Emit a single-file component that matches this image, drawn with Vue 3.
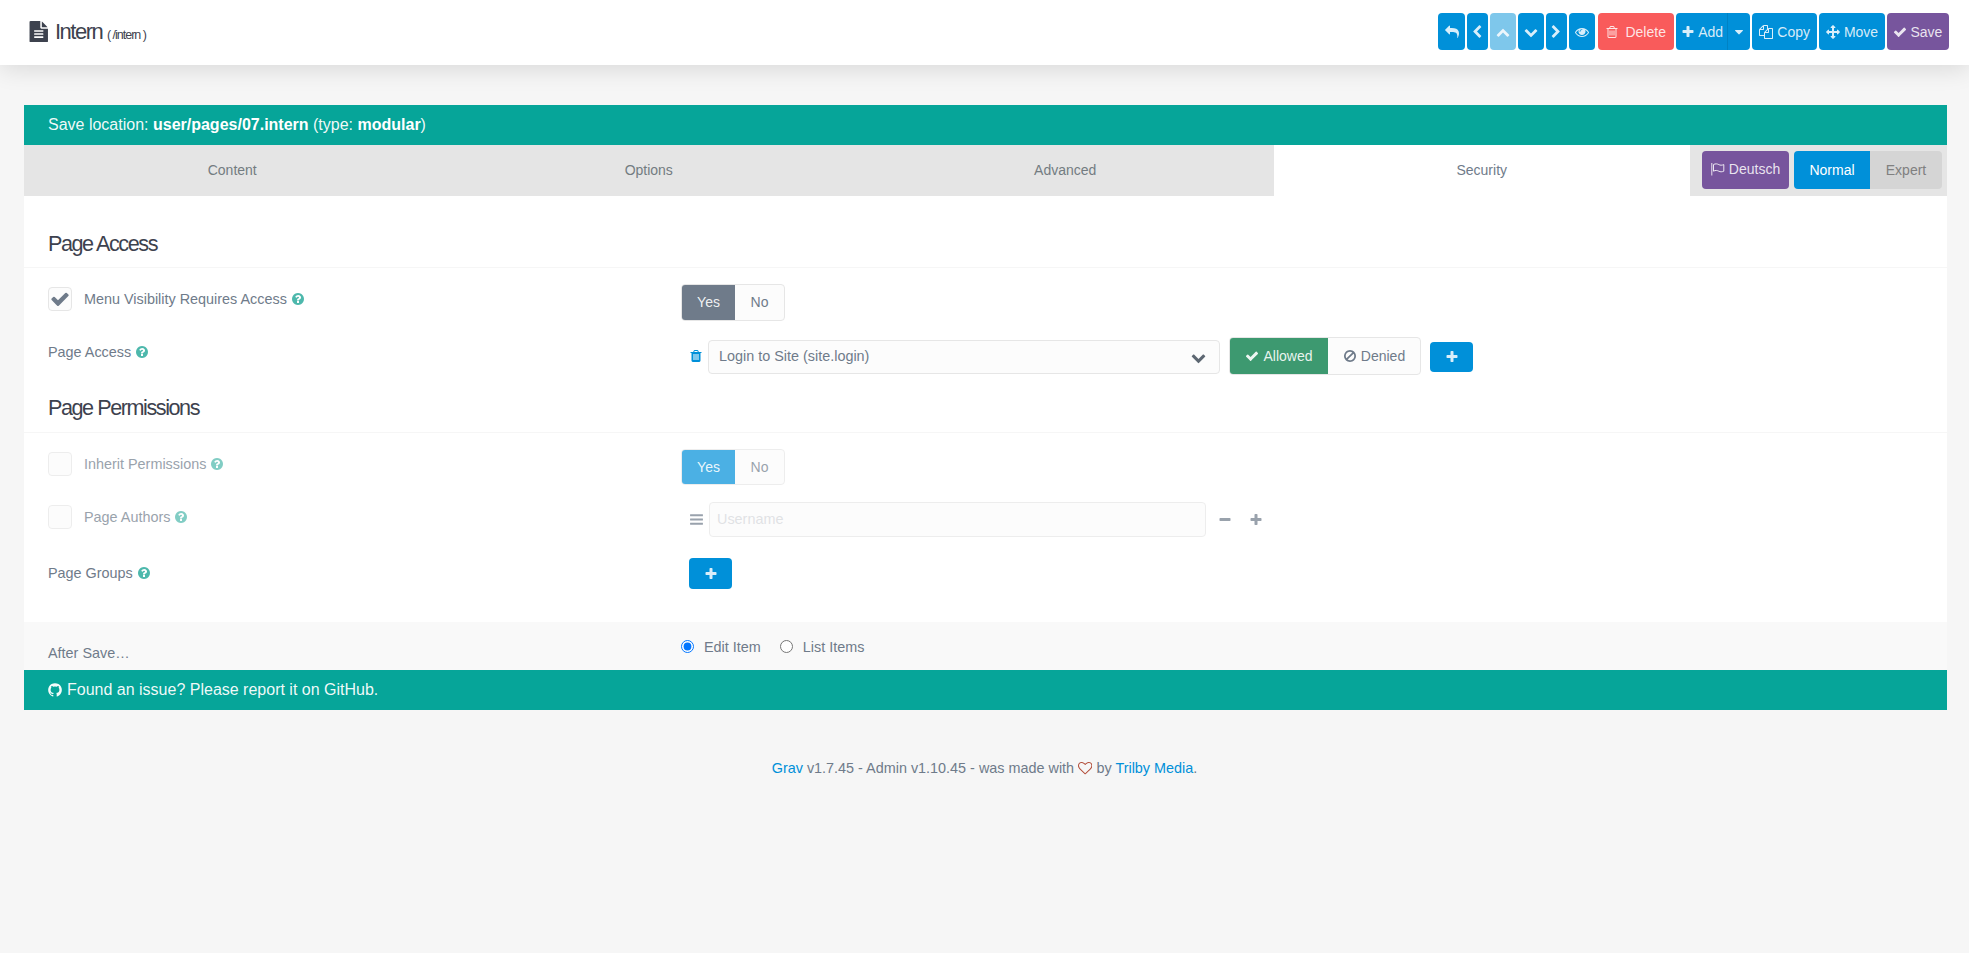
<template>
  <div class="page">
    <header class="topbar">
      <div class="title">
        <svg class="title-icon" viewBox="0 0 1792 1792"><path :d="icons.file" /></svg>
        <h1>Intern <small>( /intern )</small></h1>
      </div>
      <div class="toolbar">
        <a
          v-for="b in toolbar"
          :key="b.key"
          class="tool"
          :class="b.cls"
        >
          <svg class="ico" viewBox="0 0 1792 1792"><path :d="icons[b.icon]" /></svg>
          <span v-if="b.label">{{ b.label }}</span>
        </a>
      </div>
    </header>

    <main class="card">
      <div class="notice">
        Save location: <b>user/pages/07.intern</b> (type: <b>modular</b>)
      </div>

      <div class="tabs-bar">
        <div class="tabs">
          <div
            v-for="t in tabs"
            :key="t"
            class="tab"
            :class="{ active: t === 'Security' }"
          >{{ t }}</div>
        </div>
        <div class="tab-actions">
          <a class="lang">
            <svg class="ico" viewBox="0 0 14 14">
              <path class="flag" d="M.8 1v12.500M2.500 2.600c2-1.200 3.800-.8 5.300 0s3 .8 5 0v6.600c-2 .8-3.500.8-5 0s-3.300-1.200-5.300 0z" />
            </svg>
            Deutsch
          </a>
          <div class="mode">
            <span class="mode-on">Normal</span>
            <span class="mode-off">Expert</span>
          </div>
        </div>
      </div>

      <h2 class="section first">Page Access</h2>

      <div class="row row-1">
        <div class="label check-label">
          <span class="checkbox">
            <svg viewBox="0 0 1792 1792"><path :d="icons.check" /></svg>
          </span>
          Menu Visibility Requires Access
          <svg class="help" viewBox="0 0 1792 1792"><path :d="icons.help" /></svg>
        </div>
        <div class="toggle">
          <span class="yes slate">Yes</span>
          <span class="no">No</span>
        </div>
      </div>

      <div class="row row-2">
        <div class="label">
          Page Access
          <svg class="help" viewBox="0 0 1792 1792"><path :d="icons.help" /></svg>
        </div>
        <div class="field access">
          <svg class="trash" viewBox="0 0 1792 1792"><path :d="icons.trash" /></svg>
          <div class="select">
            <span class="select-text">Login to Site (site.login)</span>
            <svg class="chevron" viewBox="0 0 1792 1792"><path :d="icons.down" /></svg>
          </div>
          <div class="toggle allow">
            <span class="allowed">
              <svg class="ico" viewBox="0 0 1792 1792"><path :d="icons.check" /></svg>
              Allowed
            </span>
            <span class="denied">
              <svg class="ico" viewBox="0 0 1792 1792"><path :d="icons.ban" /></svg>
              Denied
            </span>
          </div>
          <a class="add-btn">
            <svg class="ico" viewBox="0 0 1792 1792"><path :d="icons.plus" /></svg>
          </a>
        </div>
      </div>

      <h2 class="section">Page Permissions</h2>

      <div class="row row-3 faded">
        <div class="label check-label">
          <span class="checkbox"></span>
          Inherit Permissions
          <svg class="help" viewBox="0 0 1792 1792"><path :d="icons.help" /></svg>
        </div>
        <div class="toggle">
          <span class="yes blue">Yes</span>
          <span class="no">No</span>
        </div>
      </div>

      <div class="row row-4">
        <div class="label check-label faded">
          <span class="checkbox"></span>
          Page Authors
          <svg class="help" viewBox="0 0 1792 1792"><path :d="icons.help" /></svg>
        </div>
        <div class="field authors faded">
          <svg class="bars" viewBox="0 0 1792 1792"><path :d="icons.bars" /></svg>
          <input class="text-input" type="text" placeholder="Username" />
          <svg class="step minus" viewBox="0 0 1792 1792"><path :d="icons.minus" /></svg>
          <svg class="step" viewBox="0 0 1792 1792"><path :d="icons.plus" /></svg>
        </div>
      </div>

      <div class="row row-5">
        <div class="label">
          Page Groups
          <svg class="help" viewBox="0 0 1792 1792"><path :d="icons.help" /></svg>
        </div>
        <div class="field">
          <a class="add-btn">
            <svg class="ico" viewBox="0 0 1792 1792"><path :d="icons.plus" /></svg>
          </a>
        </div>
      </div>

      <div class="after-save">
        <div class="label">After Save…</div>
        <div class="radios">
          <label><input type="radio" name="after" checked /> Edit Item</label>
          <label><input type="radio" name="after" /> List Items</label>
        </div>
      </div>

      <div class="notice issue">
        <svg class="gh" viewBox="0 0 1792 1792"><path :d="icons.github" /></svg>
        <span>Found an issue? Please report it on GitHub.</span>
      </div>
    </main>

    <footer class="credits">
      <a>Grav</a> v1.7.45 - Admin v1.10.45 - was made with
      <svg class="heart" viewBox="0 0 1792 1792"><path :d="icons.heart" /></svg>
      by <a>Trilby Media</a>.
    </footer>
  </div>
</template>

<script setup>
// font awesome 4 glyphs
const icons = {
  file: 'M1596 476q14 14 28 36h-472v-472q22 14 36 28zm-476 164h544v1056q0 40-28 68t-68 28h-1344q-40 0-68-28t-28-68v-1600q0-40 28-68t68-28h800v544q0 40 28 68t68 28zm160 736v-64q0-14-9-23t-23-9h-704q-14 0-23 9t-9 23v64q0 14 9 23t23 9h704q14 0 23-9t9-23zm0-256v-64q0-14-9-23t-23-9h-704q-14 0-23 9t-9 23v64q0 14 9 23t23 9h704q14 0 23-9t9-23zm0-256v-64q0-14-9-23t-23-9h-704q-14 0-23 9t-9 23v64q0 14 9 23t23 9h704q14 0 23-9t9-23z',
  check: 'M1671 566q0 40-28 68l-724 724-136 136q-28 28-68 28t-68-28l-136-136-362-362q-28-28-28-68t28-68l136-136q28-28 68-28t68 28l294 295 656-657q28-28 68-28t68 28l136 136q28 28 28 68z',
  plus: 'M1600 736v192q0 40-28 68t-68 28h-416v416q0 40-28 68t-68 28h-192q-40 0-68-28t-28-68v-416h-416q-40 0-68-28t-28-68v-192q0-40 28-68t68-28h416v-416q0-40 28-68t68-28h192q40 0 68 28t28 68v416h416q40 0 68 28t28 68z',
  minus: 'M1600 736v192q0 40-28 68t-68 28h-1216q-40 0-68-28t-28-68v-192q0-40 28-68t68-28h1216q40 0 68 28t28 68z',
  down: 'M1683 808l-742 741q-19 19-45 19t-45-19l-742-741q-19-19-19-45.5t19-45.5l166-165q19-19 45-19t45 19l531 531 531-531q19-19 45-19t45 19l166 165q19 19 19 45.500t-19 45.500z',
  up: 'M1683 1331l-166 165q-19 19-45 19t-45-19l-531-531-531 531q-19 19-45 19t-45-19l-166-165q-19-19-19-45.500t19-45.500l742-741q19-19 45-19t45 19l742 741q19 19 19 45.500t-19 45.500z',
  left: 'M1427 301l-531 531 531 531q19 19 19 45t-19 45l-166 166q-19 19-45 19t-45-19l-742-742q-19-19-19-45t19-45l742-742q19-19 45-19t45 19l166 166q19 19 19 45t-19 45z',
  right: 'M1363 877l-742 742q-19 19-45 19t-45-19l-166-166q-19-19-19-45t19-45l531-531-531-531q-19-19-19-45t19-45l166-166q19-19 45-19t45 19l742 742q19 19 19 45t-19 45z',
  reply: 'M1792 1120q0 166-127 451-3 7-10.500 24t-13.500 30-13 22q-12 17-28 17-15 0-23.500-10t-8.500-25q0-9 2.500-26.500t2.500-23.500q5-68 5-123 0-101-17.500-181t-48.500-138.500-80-101-105.500-69.500-133-42.500-154-21.500-175.500-6h-224v256q0 26-19 45t-45 19-45-19l-512-512q-19-19-19-45t19-45l512-512q19-19 45-19t45 19 19 45v256h224q713 0 875 403 53 134 53 333z',
  eye: 'M1664 960q-152-236-381-353 61 104 61 225 0 185-131.500 316.500t-316.500 131.500-316.500-131.500-131.500-316.500q0-121 61-225-229 117-381 353 133 205 333.500 326.500t434.500 121.500 434.500-121.500 333.500-326.500zm-720-384q0-20-14-34t-34-14q-125 0-214.500 89.500t-89.500 214.500q0 20 14 34t34 14 34-14 14-34q0-86 61-147t147-61q20 0 34-14t14-34zm848 384q0 34-20 69-140 230-376.500 368.500t-499.500 138.500-499.500-139-376.500-368q-20-35-20-69t20-69q140-229 376.500-368t499.500-139 499.500 139 376.500 368q20 35 20 69z',
  trashO: 'M704 736v576q0 14-9 23t-23 9h-64q-14 0-23-9t-9-23v-576q0-14 9-23t23-9h64q14 0 23 9t9 23zm256 0v576q0 14-9 23t-23 9h-64q-14 0-23-9t-9-23v-576q0-14 9-23t23-9h64q14 0 23 9t9 23zm256 0v576q0 14-9 23t-23 9h-64q-14 0-23-9t-9-23v-576q0-14 9-23t23-9h64q14 0 23 9t9 23zm128 724v-948h-896v948q0 22 7 40.500t14.500 27 10.500 8.500h832q3 0 10.500-8.500t14.500-27 7-40.500zm-672-1076h448l-48-117q-7-9-17-11h-317q-10 2-17 11zm928 32v64q0 14-9 23t-23 9h-96v948q0 83-47 143.500t-113 60.500h-832q-66 0-113-58.500t-47-141.500v-952h-96q-14 0-23-9t-9-23v-64q0-14 9-23t23-9h309l70-167q15-37 54-63t79-26h320q40 0 79 26t54 63l70 167h309q14 0 23 9t9 23z',
  trash: 'M704 1376v-704q0-14-9-23t-23-9h-64q-14 0-23 9t-9 23v704q0 14 9 23t23 9h64q14 0 23-9t9-23zm256 0v-704q0-14-9-23t-23-9h-64q-14 0-23 9t-9 23v704q0 14 9 23t23 9h64q14 0 23-9t9-23zm256 0v-704q0-14-9-23t-23-9h-64q-14 0-23 9t-9 23v704q0 14 9 23t23 9h64q14 0 23-9t9-23zm-544-992h448l-48-117q-7-9-17-11h-317q-10 2-17 11zm928 32v64q0 14-9 23t-23 9h-96v948q0 83-47 143.500t-113 60.500h-832q-66 0-113-58.500t-47-141.500v-952h-96q-14 0-23-9t-9-23v-64q0-14 9-23t23-9h309l70-167q15-37 54-63t79-26h320q40 0 79 26t54 63l70 167h309q14 0 23 9t9 23z',
  copy: 'M1696 384q40 0 68 28t28 68v1216q0 40-28 68t-68 28h-960q-40 0-68-28t-28-68v-288h-544q-40 0-68-28t-28-68v-672q0-40 20-88t48-76l408-408q28-28 76-48t88-20h416q40 0 68 28t28 68v328q68-40 128-40h416zm-544 213l-299 299h299v-299zm-640-384l-299 299h299v-299zm196 647l316-316v-416h-384v416q0 40-28 68t-68 28h-416v640h512v-256q0-40 20-88t48-76zm956 804v-1152h-384v416q0 40-28 68t-68 28h-416v640h896z',
  move: 'M1792 896q0 26-19 45l-256 256q-19 19-45 19t-45-19-19-45v-128h-384v384h128q26 0 45 19t19 45-19 45l-256 256q-19 19-45 19t-45-19l-256-256q-19-19-19-45t19-45 45-19h128v-384h-384v128q0 26-19 45t-45 19-45-19l-256-256q-19-19-19-45t19-45l256-256q19-19 45-19t45 19 19 45v128h384v-384h-128q-26 0-45-19t-19-45 19-45l256-256q19-19 45-19t45 19l256 256q19 19 19 45t-19 45-45 19h-128v384h384v-128q0-26 19-45t45-19 45 19l256 256q19 19 19 45z',
  caret: 'M1408 704q0 26-19 45l-448 448q-19 19-45 19t-45-19l-448-448q-19-19-19-45t19-45 45-19h896q26 0 45 19t19 45z',
  ban: 'M1440 893q0-161-87-295l-754 753q137 89 297 89 111 0 211.500-43.500t173.500-116.500 116-174.500 43-212.500zm-999 299l755-754q-135-91-300-91-148 0-273 73t-198 199-73 274q0 162 89 299zm1223-299q0 157-61 300t-163.500 246-245 164-298.500 61-298.500-61-245-164-163.500-246-61-300 61-299.500 163.500-245.500 245-164 298.500-61 298.500 61 245 164 163.500 245.500 61 299.500z',
  help: 'M1024 1376v-192q0-14-9-23t-23-9h-192q-14 0-23 9t-9 23v192q0 14 9 23t23 9h192q14 0 23-9t9-23zm256-672q0-88-55.500-163t-138.500-116-170-41q-243 0-371 213-15 24 8 42l132 100q7 6 19 6 16 0 25-12 53-68 86-92 34-24 86-24 48 0 85.500 26t37.500 59q0 38-20 61t-68 45q-63 28-115.500 86.500t-52.500 125.500v36q0 14 9 23t23 9h192q14 0 23-9t9-23q0-19 21.500-49.500t54.500-49.500q32-18 49-28.500t46-35 44.500-48 28-60.500 12.500-81zm384 192q0 209-103 385.500t-279.500 279.500-385.500 103-385.500-103-279.500-279.500-103-385.500 103-385.500 279.500-279.500 385.500-103 385.500 103 279.500 279.500 103 385.500z',
  bars: 'M1664 1344v128q0 26-19 45t-45 19h-1408q-26 0-45-19t-19-45v-128q0-26 19-45t45-19h1408q26 0 45 19t19 45zm0-512v128q0 26-19 45t-45 19h-1408q-26 0-45-19t-19-45v-128q0-26 19-45t45-19h1408q26 0 45 19t19 45zm0-512v128q0 26-19 45t-45 19h-1408q-26 0-45-19t-19-45v-128q0-26 19-45t45-19h1408q26 0 45 19t19 45z',
  heart: 'M1664 596q0-81-21.500-143t-55-98.500-81.500-59.500-94-31-98-8-112 25.500-110.500 64-86.500 72-60 61.500q-18 22-49 22t-49-22q-24-28-60-61.500t-86.500-72-110.500-64-112-25.500-98 8-94 31-81.500 59.500-55 98.500-21.500 143q0 168 187 355l581 560 580-559q188-188 188-356zm128 0q0 221-229 450l-623 600q-18 18-44 18t-44-18l-624-602q-10-8-27.500-26t-55.500-65.500-68-97.500-53.500-121-23.500-138q0-220 127-344t351-124q62 0 126.500 21.500t120 58 95.500 68.500 76 68q36-36 76-68t95.500-68.500 120-58 126.500-21.500q224 0 351 124t127 344z',
  github: 'M896 128q209 0 385.500 103t279.500 279.500 103 385.500q0 251-146.500 451.500t-378.500 277.500q-27 5-40-7t-13-30q0-3 .5-76.500t.5-134.500q0-97-52-142 57-6 102.500-18t94-39 81-66.500 53-105 20.500-150.500q0-119-79-206 37-91-8-204-28-9-81 11t-92 44l-38 24q-93-26-192-26t-192 26q-16-11-42.500-27t-83.500-38.500-85-13.500q-45 113-8 204-79 87-79 206 0 85 20.500 150t52.500 105 80.500 67 94 39 102.500 18q-39 36-49 103-21 10-45 15t-57 5-65.500-21.500-55.500-62.500q-19-32-48.500-52t-49.500-24l-20-3q-21 0-29 4.500t-5 11.500 9 14 13 12l7 5q22 10 43.500 38t31.500 51l10 23q13 38 44 61.500t67 30 69.500 7 55.500-3.500l23-4q0 38 .5 88.500t.5 54.500q0 18-13 30t-40 7q-232-77-378.500-277.500t-146.500-451.500q0-209 103-385.500t279.500-279.500 385.500-103z'
}

const toolbar = [
  { key: 'back', icon: 'reply', cls: 'wide' },
  { key: 'prev', icon: 'left', cls: 'narrow' },
  { key: 'up', icon: 'up', cls: 'mid off' },
  { key: 'down', icon: 'down', cls: 'mid' },
  { key: 'next', icon: 'right', cls: 'narrow' },
  { key: 'view', icon: 'eye', cls: 'wide' },
  { key: 'delete', icon: 'trashO', label: 'Delete', cls: 'danger' },
  { key: 'add', icon: 'plus', label: 'Add', cls: 'split-l' },
  { key: 'more', icon: 'caret', cls: 'split-r' },
  { key: 'copy', icon: 'copy', label: 'Copy', cls: 'copy' },
  { key: 'move', icon: 'move', label: 'Move', cls: 'move' },
  { key: 'save', icon: 'check', label: 'Save', cls: 'purple' }
]

const tabs = ['Content', 'Options', 'Advanced', 'Security']
</script>

<style>
html,
body {
  background: #f6f6f6;
}
</style>

<style scoped>
.page {
  min-height: 953px;
  font-family: "Liberation Sans", Arial, sans-serif;
  font-size: 14.4px;
  line-height: 22px;
  color: #6f7b8a;
  background: #f6f6f6;
}

svg {
  fill: currentColor;
  flex: none;
}

.ico {
  width: 14px;
  height: 14px;
}

/* top bar */
.topbar {
  height: 65px;
  box-sizing: border-box;
  padding: 13px 20.3px 0 27.5px;
  display: flex;
  justify-content: space-between;
  align-items: flex-start;
  background: #fff;
  box-shadow: 0 4px 24px rgba(0, 0, 0, 0.12);
  position: relative;
}

.title {
  display: flex;
  align-items: center;
  height: 37px;
  padding-top: 3px;
  box-sizing: border-box;
  color: #3d424e;
}

.title-icon {
  width: 21.5px;
  height: 21.5px;
  margin-top: -3px;
  margin-right: 6px;
}

.title h1 {
  margin: 0;
  font-size: 22px;
  font-weight: 400;
  letter-spacing: -1.5px;
  white-space: nowrap;
}

.title small {
  font-size: 12.500px;
  letter-spacing: -1px;
}

.toolbar {
  display: flex;
  gap: 2.100px;
  font-size: 14px;
}

.tool {
  height: 37px;
  box-sizing: border-box;
  display: flex;
  align-items: center;
  justify-content: center;
  gap: 4px;
  border-radius: 4px;
  background: #0090d9;
  color: rgba(255, 255, 255, 0.85);
}

.wide { width: 26.800px; }
.mid { width: 26px; }
.narrow { width: 20.600px; }
.off { opacity: 0.5; }

.danger {
  width: 76.300px;
  background: #f95b5b;
  gap: 6px;
}

.purple {
  width: 61.700px;
  gap: 3px;
  background: #77559d;
}

.copy { width: 64.800px; }
.move { width: 65.800px; }

.split-l {
  width: 52.500px;
  gap: 3px;
  border-radius: 4px 0 0 4px;
  box-shadow: inset -1px 0 0 #0082c4;
  margin-right: -2.100px;
}

.split-r {
  width: 21.700px;
  border-radius: 0 4px 4px 0;
}

/* card */
.card {
  margin: 40px 22px 0 24px;
  background: #fff;
}

.notice {
  height: 40px;
  padding-left: 24px;
  line-height: 40px;
  font-size: 16px;
  color: rgba(255, 255, 255, 0.95);
  background: #06a599;
}

.notice b {
  color: #fff;
}

.tabs-bar {
  display: flex;
  height: 51px;
  font-size: 14px;
  background: #e5e5e5;
}

.tabs {
  flex: 1;
  display: flex;
}

.tab {
  flex: 1;
  padding-bottom: 2px;
  display: flex;
  align-items: center;
  justify-content: center;
  color: #737c81;
}

.tab.active {
  background: #fff;
  color: #6f7b8a;
}

.tab-actions {
  width: 257px;
  box-sizing: border-box;
  padding: 6px 5px 0 12px;
  display: flex;
  gap: 5px;
  align-items: flex-start;
}

.lang {
  width: 87px;
  height: 38px;
  padding-bottom: 2px;
  box-sizing: border-box;
  display: flex;
  align-items: center;
  justify-content: center;
  gap: 4px;
  border-radius: 4px;
  background: #77559d;
  color: rgba(255, 255, 255, 0.85);
}

.flag {
  fill: none;
  stroke: currentColor;
  stroke-width: 1;
}

.mode {
  display: flex;
  height: 38px;
  line-height: 38px;
  text-align: center;
}

.mode-on {
  width: 76px;
  background: #0090d9;
  color: #fff;
  border-radius: 4px 0 0 4px;
}

.mode-off {
  width: 72px;
  background: #d5d5d5;
  color: #808080;
  border-radius: 0 4px 4px 0;
}

/* form */
.section {
  margin: 0;
  padding: 18px 24px 9px;
  font-size: 21.600px;
  line-height: 30px;
  font-weight: 400;
  letter-spacing: -1.440px;
  color: #3d424e;
  border-bottom: 1px solid #f6f6f6;
}

.section.first {
  padding-top: 33px;
  padding-bottom: 8px;
}

.row {
  display: flex;
  align-items: flex-start;
}

.row-1 { margin-top: 16px; }
.row-2 { margin-top: 16px; }
.row-3 { margin-top: 16px; }
.row-4 { margin-top: 17px; }
.row-5 { margin-top: 21px; }

.label {
  width: 657px;
  flex: none;
  box-sizing: border-box;
  padding: 4px 0 0 24px;
  display: flex;
  align-items: center;
  gap: 4px;
}

.check-label {
  padding-top: 3px;
}

.checkbox {
  width: 24px;
  height: 24px;
  box-sizing: border-box;
  margin-right: 8px;
  display: flex;
  align-items: center;
  justify-content: center;
  border: 1px solid #e6e6e6;
  border-radius: 4px;
  background: #fcfcfc;
  color: #6f7b8a;
}

.checkbox svg {
  width: 20px;
  height: 20px;
}

.help {
  width: 14px;
  height: 14px;
  color: #4db8ac;
}

.faded {
  opacity: 0.7;
}

.toggle {
  display: flex;
  height: 37px;
  box-sizing: border-box;
  border: 1px solid #e6e6e6;
  border-radius: 4px;
  font-size: 14px;
  line-height: 35px;
  text-align: center;
  background: #fcfcfc;
  overflow: hidden;
}

.yes {
  width: 53px;
  color: rgba(255, 255, 255, 0.9);
}

.yes.slate { background: #6f7b8a; }
.yes.blue { background: #0090d9; }

.no {
  width: 49px;
}

.row-3 .toggle {
  height: 36px;
  line-height: 34px;
}

.field {
  display: flex;
  align-items: center;
  padding-left: 8px;
}

.access {
  height: 38px;
  align-items: flex-start;
}

.trash {
  width: 14px;
  height: 14px;
  margin: 12px 5px 0 0;
  color: #0090d9;
}

.select {
  width: 512px;
  height: 34px;
  margin-top: 3px;
  box-sizing: border-box;
  padding: 0 13px 0 10px;
  display: flex;
  align-items: center;
  justify-content: space-between;
  border: 1px solid #e6e6e6;
  border-radius: 4px;
  background: #fcfcfc;
}

.select-text {
  margin-top: -2px;
}

.chevron {
  width: 15px;
  height: 15px;
  color: #5d6772;
}

.allow {
  height: 38px;
  margin-left: 9px;
  line-height: 36px;
}

.allowed,
.denied {
  display: flex;
  align-items: center;
  justify-content: center;
  gap: 4px;
}

.allowed {
  width: 98px;
  background: #3d9970;
  color: rgba(255, 255, 255, 0.9);
}

.denied {
  width: 92px;
}

.add-btn {
  width: 43px;
  height: 31px;
  display: flex;
  align-items: center;
  justify-content: center;
  border-radius: 4px;
  background: #0090d9;
  color: rgba(255, 255, 255, 0.85);
}

.access .add-btn {
  height: 30px;
  margin: 5px 0 0 9px;
}

.authors {
  height: 35px;
}

.bars {
  width: 15px;
  height: 15px;
  margin-right: 5px;
}

.text-input {
  width: 497px;
  height: 35px;
  box-sizing: border-box;
  padding: 0 7px 2px;
  margin-right: 12px;
  border: 1px solid #e6e6e6;
  border-radius: 4px;
  background: #fcfcfc;
  font: inherit;
  outline: none;
}

.text-input::placeholder {
  color: #d4d6da;
}

.step {
  width: 14px;
  height: 14px;
}

.minus {
  margin-right: 17px;
}

.after-save {
  height: 48px;
  margin-top: 33px;
  display: flex;
  align-items: flex-start;
  background: #f9f9f9;
}

.after-save .label {
  padding-top: 20px;
}

.radios {
  display: flex;
  gap: 19px;
  padding-top: 14px;
}

.radios label {
  display: flex;
  align-items: center;
  gap: 10px;
}

.radios input {
  width: 13px;
  height: 13px;
  margin: -2px 0 0;
}

.issue {
  display: flex;
  align-items: center;
  gap: 4px;
  padding-left: 23px;
}

.gh {
  width: 16px;
  height: 16px;
}

.credits {
  margin-top: 47px;
  text-align: center;
}

.credits a {
  color: #0090d9;
}

.heart {
  width: 14.400px;
  height: 14.400px;
  vertical-align: -2px;
  color: #b24c38;
}
</style>
